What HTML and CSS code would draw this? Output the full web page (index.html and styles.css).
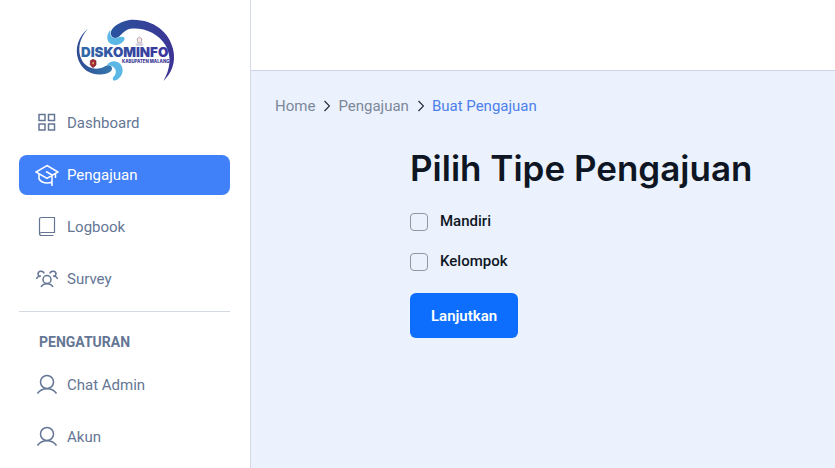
FILE: index.html
```html
<!DOCTYPE html>
<html lang="id">
<head>
<meta charset="utf-8">
<meta name="viewport" content="width=device-width, initial-scale=1">
<title>Buat Pengajuan</title>
<link rel="stylesheet" href="styles.css">
</head>
<body>
<div class="app">
  <aside class="sidebar">
    <a class="brand" href="#" aria-label="Diskominfo Kabupaten Malang">
      <svg class="logo" viewBox="0 0 330 240">
        <defs>
          <linearGradient id="swoosh" x1="0" x2="1"><stop offset="0" stop-color="#29549f"/><stop offset="1" stop-color="#3d3494"/></linearGradient>
          <linearGradient id="arc" x1="0" x2="1"><stop offset="0" stop-color="#2f4a92"/><stop offset="1" stop-color="#3479ae"/></linearGradient>
          <linearGradient id="word" x1="0" x2="1"><stop offset="0" stop-color="#2f6aa8"/><stop offset=".5" stop-color="#344aa0"/><stop offset="1" stop-color="#3b329b"/></linearGradient>
        </defs>
        <path fill="url(#swoosh)" d="M123 74C117 52 158 29 190 29C252 30 296 65 309 116C319 158 304 190 280 213C301 177 306 139 286 105C265 69 220 51 181 56C165 59 157 71 148 79C139 87 126 85 123 74Z"/>
        <path fill="url(#arc)" d="M54 56C25 79 13 116 25 149C36 180 65 197 98 193C116 191 128 182 126 174C123 163 112 165 101 171C78 182 50 174 37 153C20 124 27 84 54 56Z"/>
        <path fill="#5bb8e5" d="M122 59C108 73 108 95 125 103C142 110 160 99 164 87C165 79 151 79 142 83C126 89 117 75 122 59Z"/>
        <path fill="#5bb8e5" d="M112 165C119 152 139 150 151 162C165 178 157 207 133 212C127 211 127 203 132 199C143 188 139 167 112 165Z"/>
        <path fill="#f4e9e4" stroke="#9b8490" stroke-width="2" d="M201 87L208 81L216 87L213 99H204Z"/>
        <path fill="#d5d2df" d="M196 101L204 98H214L221 102L217 108H200Z"/>
        <text class="logo-word" x="33" y="140" fill="url(#word)">DISKOMINFO</text>
        <text class="logo-sub" x="156" y="159">KABUPATEN MALANG</text>
        <path fill="#a92832" stroke="#6b2635" stroke-width="2" d="M61 152L69 148L78 152V165L69 173L61 165Z"/>
        <path fill="#cba76b" d="M67 156H72V163H67Z"/>
      </svg>
    </a>
    <nav class="menu">
      <a class="item" href="#">
        <svg class="icon" viewBox="0 0 24 24"><path d="M4 3.500h6v6H4zM13.500 3.500h6v6h-6zM4 13h6v6H4zM13.500 13h6v6h-6z"/></svg>
        Dashboard
      </a>
      <a class="item active" href="#" aria-current="page">
        <svg class="icon" viewBox="0 0 24 24"><path d="M12 2.500L23 9L12 15.500L1 9ZM4 11v5c2 3 5 4 8 4 2 0 3 0 5-1M20.500 11v4M11 8.500l6 3.500v11"/></svg>
        Pengajuan
      </a>
      <a class="item" href="#">
        <svg class="icon thin" viewBox="0 0 24 24"><path d="M19.500 17.500V2.500H6.500Q4.500 2.500 4.500 4.500V18.500Q4.500 20.500 6.500 20.500H18.500M4.500 19Q4.500 17.500 6.500 17.500H20"/></svg>
        Logbook
      </a>
      <a class="item" href="#">
        <svg class="icon" viewBox="0 0 24 24"><circle cx="12" cy="12.500" r="4"/><path d="M6 20c2-4.500 10-4.500 12 0M1.500 12c.5-2 2-3 4.500-3M9 6.500C8.500 3.500 3 3.500 3 7c0 1 .5 2 2 2.500M15 6.500c.5-3 6-3 6 .5 0 1-.5 2-2 2.500M18 9c2.500 0 4 1 4.500 3"/></svg>
        Survey
      </a>
      <hr class="divider">
      <h2 class="section">PENGATURAN</h2>
      <a class="item" href="#">
        <svg class="icon" viewBox="0 0 24 24"><circle cx="12" cy="9" r="6.500"/><path d="M2.500 20.500c4-6.500 15-6.500 19 0"/></svg>
        Chat Admin
      </a>
      <a class="item" href="#">
        <svg class="icon" viewBox="0 0 24 24"><circle cx="12" cy="9" r="6.500"/><path d="M2.500 20.500c4-6.500 15-6.500 19 0"/></svg>
        Akun
      </a>
    </nav>
  </aside>
  <div class="page">
    <header class="topbar"></header>
    <main class="content">
      <nav class="breadcrumb" aria-label="Breadcrumb">
        <a href="#">Home</a>
        <svg class="chevron" viewBox="0 0 7 12"><path d="M1.500 1l5 5-5 5"/></svg>
        <a href="#">Pengajuan</a>
        <svg class="chevron" viewBox="0 0 7 12"><path d="M1.500 1l5 5-5 5"/></svg>
        <a class="current" href="#" aria-current="page">Buat Pengajuan</a>
      </nav>
      <form class="form">
        <h1>Pilih Tipe Pengajuan</h1>
        <div class="option"><input type="checkbox" id="mandiri"><label for="mandiri">Mandiri</label></div>
        <div class="option"><input type="checkbox" id="kelompok"><label for="kelompok">Kelompok</label></div>
        <button type="button">Lanjutkan</button>
      </form>
    </main>
  </div>
</div>
</body>
</html>
```
FILE: styles.css
```css
* { box-sizing: border-box; }

body {
  margin: 0;
  font-family: Roboto, sans-serif;
  font-size: 15px;
  line-height: 24px;
  color: #0f1623;
}

a { color: inherit; text-decoration: none; }

.app { display: flex; min-height: 100vh; }

.sidebar {
  flex: 0 0 251px;
  padding: 10px 20px 0 19px;
  border-right: 1px solid #d3dae6;
  background: #fff;
}

.brand { display: flex; justify-content: center; }
.logo { width: 110px; height: 80px; }
.logo-word {
  font: 900 40px Inter, sans-serif;
}
.logo-sub {
  font: 800 13px Inter, sans-serif;
  fill: #3b3795;
}

.menu { display: flex; flex-direction: column; gap: 12px; padding-top: 13px; }
.item {
  display: flex;
  align-items: center;
  gap: 8px;
  height: 40px;
  padding: 0 16px;
  border-radius: 8px;
  color: #647694;
}
.item.active { background: #4080f8; color: #fff; }

.icon {
  width: 24px;
  height: 24px;
  fill: none;
  stroke: currentColor;
  stroke-width: 1.5;
}
.icon.thin { stroke-width: 1.2; }

.divider {
  width: 100%;
  height: 1px;
  margin: 0;
  border: 0;
  background: #d3dae2;
}
.section {
  margin: 6px 0 -1px;
  padding: 0 20px;
  font-size: 14px;
  font-weight: 700;
  color: #647694;
}

.page { flex: 1; display: flex; flex-direction: column; min-width: 0; }
.topbar { height: 71px; border-bottom: 1px solid #ced5e6; background: #fff; }
.content { flex: 1; padding: 23px 20px 24px 24px; background: #ebf2fe; }

.breadcrumb { display: flex; align-items: center; gap: 8px; color: #7c8799; }
.breadcrumb .current { color: #4b80ea; }
.chevron {
  width: 7px;
  height: 12px;
  fill: none;
  stroke: #202a3a;
  stroke-width: 1.2;
}

.form { margin-left: 25%; padding-top: 26px; }
.form h1 {
  margin: 0 0 17px;
  font: 600 35px/48px Inter, sans-serif;
  white-space: nowrap;
}

.option {
  display: flex;
  align-items: flex-start;
  gap: 12px;
  margin-bottom: 16px;
  font-weight: 500;
}
.option input {
  appearance: none;
  width: 18px;
  height: 18px;
  margin: 4px 0 0;
  border: 1px solid #8d97a6;
  border-radius: 4px;
}
.option input:checked { background: #0d6efd; }

button {
  height: 45px;
  margin: 4px 0 0;
  padding: 0 21px;
  border: 0;
  border-radius: 6px;
  background: #0d6efd;
  color: #fff;
  font: 600 15px/24px Roboto, sans-serif;
}
```
